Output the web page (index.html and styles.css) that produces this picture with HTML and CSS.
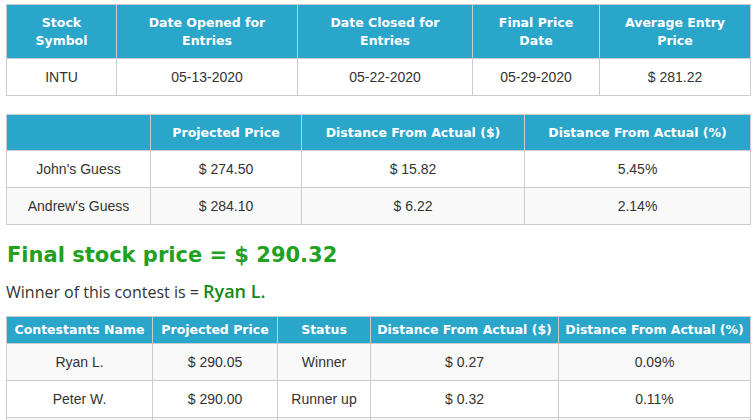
FILE: index.html
```html
<!DOCTYPE html>
<html>
<head>
<meta charset="utf-8">
<link rel="stylesheet" href="styles.css">
</head>
<body>
<div class="page">
  <table class="grid t1">
    <colgroup>
      <col class="c110"><col class="c181"><col class="c175"><col class="c127"><col class="c151">
    </colgroup>
    <thead>
      <tr><th>Stock<br>Symbol</th><th>Date Opened for<br>Entries</th><th>Date Closed for<br>Entries</th><th>Final Price<br>Date</th><th>Average Entry<br>Price</th></tr>
    </thead>
    <tbody>
      <tr><td>INTU</td><td>05-13-2020</td><td>05-22-2020</td><td>05-29-2020</td><td>$ 281.22</td></tr>
    </tbody>
  </table>

  <table class="grid t2">
    <colgroup>
      <col class="c144"><col class="c151"><col class="c223"><col class="c226">
    </colgroup>
    <thead>
      <tr><th></th><th>Projected Price</th><th>Distance From Actual ($)</th><th>Distance From Actual (%)</th></tr>
    </thead>
    <tbody>
      <tr><td>John's Guess</td><td>$ 274.50</td><td>$ 15.82</td><td>5.45%</td></tr>
      <tr class="alt"><td>Andrew's Guess</td><td>$ 284.10</td><td>$ 6.22</td><td>2.14%</td></tr>
    </tbody>
  </table>

  <h2 class="final">Final stock price = $ 290.32</h2>
  <p class="winner">Winner of this contest is = <strong>Ryan L.</strong></p>

  <table class="grid t3">
    <colgroup>
      <col class="c146"><col class="c125"><col class="c93"><col class="c188"><col class="c192">
    </colgroup>
    <thead>
      <tr><th>Contestants Name</th><th>Projected Price</th><th>Status</th><th>Distance From Actual ($)</th><th>Distance From Actual (%)</th></tr>
    </thead>
    <tbody>
      <tr class="alt"><td>Ryan L.</td><td>$ 290.05</td><td>Winner</td><td>$ 0.27</td><td>0.09%</td></tr>
      <tr><td>Peter W.</td><td>$ 290.00</td><td>Runner up</td><td>$ 0.32</td><td>0.11%</td></tr>
      <tr class="alt"><td></td><td></td><td></td><td></td><td></td></tr>
    </tbody>
  </table>
</div>
</body>
</html>
```

FILE: styles.css
```css
html, body {
  margin: 0;
  padding: 0;
  background: #fff;
}

.page {
  padding: 4px 4px 0 6px;
}

.grid {
  border-collapse: collapse;
  table-layout: fixed;
  width: 745px;
  font-family: "Liberation Sans", Arial, sans-serif;
  font-size: 14px;
  color: #333;
}

.grid th,
.grid td {
  border: 1px solid #ccc;
  text-align: center;
  vertical-align: middle;
  padding: 0 4px;
  overflow: hidden;
  white-space: nowrap;
}

.grid th {
  background: #2ba6cb;
  color: #fff;
  font-family: "DejaVu Sans", Verdana, sans-serif;
  font-weight: bold;
  font-size: 12.5px;
  line-height: 18px;
}

.grid td {
  height: 36px;
  line-height: 20px;
  padding-top: 0;
  padding-bottom: 0;
}

.grid tr.alt td {
  background: #f9f9f9;
}

.t1 th { height: 53px; }
.t2 { margin-top: 18px; }
.t2 th { height: 35px; }
.t3 { margin-top: 12px; }
.t3 th { height: 26px; }

.c110 { width: 110px; }
.c181 { width: 181px; }
.c175 { width: 175px; }
.c127 { width: 127px; }
.c151 { width: 151px; }
.c144 { width: 144px; }
.c223 { width: 223px; }
.c226 { width: 226px; }
.c146 { width: 146px; }
.c125 { width: 125px; }
.c93 { width: 93px; }
.c188 { width: 188px; }
.c192 { width: 192px; }

.final {
  margin: 15px 0 0 1px;
  font-family: "DejaVu Sans", Verdana, sans-serif;
  font-weight: bold;
  font-size: 21px;
  line-height: 30px;
  color: #21a021;
}

.winner {
  margin: 9px 0 0 0;
  font-family: "Open Sans", sans-serif;
  font-size: 16px;
  line-height: 24px;
  color: #333;
}

.winner strong {
  font-size: 18px;
  font-weight: 600;
  color: #138a13;
}
```
